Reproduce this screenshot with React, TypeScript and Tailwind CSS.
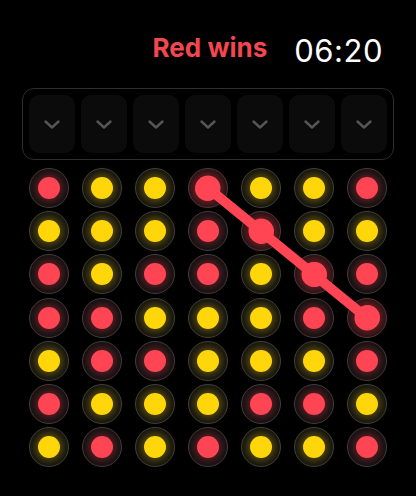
import React from "react";

const board = [
  "RYYRYYR",
  "YYYRRYY",
  "RYRRYRR",
  "RRYYYRR",
  "YRRYYYR",
  "RYYYRRY",
  "YRYRYYR",
];

const wins = ["0-3", "1-4", "2-5", "3-6"];

function Chevron() {
  return (
    <svg width="18" height="11" viewBox="0 0 18 11" fill="none">
      <path d="M2.5 2.5 L9 8.5 L15.5 2.5" stroke="#555555" strokeWidth="2.4" strokeLinecap="round" strokeLinejoin="round" />
    </svg>
  );
}

function Cell({ color, win }: { color: string; win: boolean }) {
  const red = color === "R";
  return (
    <div className="flex items-center justify-center">
      <div
        className={`w-[40px] h-[40px] rounded-full border-[1.5px] border-[#3c3c3c] flex items-center justify-center ${
          win ? "bg-[#241012]" : "bg-[#101010]"
        }`}
      >
        <div
          className={
            red
              ? `${win ? "w-[25px] h-[25px]" : "w-[22px] h-[22px]"} rounded-full bg-[#ff4553] shadow-[0_0_9px_3px_rgba(255,69,83,0.32)]`
              : "w-[22px] h-[22px] rounded-full bg-[#ffd60a] shadow-[0_0_9px_3px_rgba(255,214,10,0.32)]"
          }
        />
      </div>
    </div>
  );
}

export default function App() {
  return (
    <div className="w-[416px] h-[496px] bg-black overflow-hidden font-['Inter',sans-serif]">
      <div className="h-[88px] flex items-center justify-end pr-[33px] pt-[14px]">
        <span className="text-[#f2474e] font-bold text-[26px] mr-[27px] -mt-[8px]">Red wins</span>
        <span className="text-white text-[31px] tracking-[0.5px]">06:20</span>
      </div>

      <div className="mx-[22px] w-[372px] h-[72px] rounded-[12px] border border-[#2e2e2e] p-[6px] flex gap-[6px]">
        {Array.from({ length: 7 }).map((_, i) => (
          <button key={i} className="flex-1 rounded-[10px] bg-[#0b0b0b] flex items-center justify-center">
            <Chevron />
          </button>
        ))}
      </div>

      <div className="relative mx-[22px] w-[372px] mt-[8px]">
        <div className="grid grid-cols-7 auto-rows-[40px] gap-y-[3.2px]">
          {board.map((row, r) =>
            row.split("").map((c, col) => (
              <Cell key={`${r}-${col}`} color={c} win={wins.includes(`${r}-${col}`)} />
            ))
          )}
        </div>
        <svg className="absolute inset-0 pointer-events-none" width="372" height="300">
          <line x1="186" y1="20" x2="345" y2="150" stroke="#ff4553" strokeWidth="10" strokeLinecap="round" />
          {[
            [186, 20],
            [239, 63],
            [292, 106.5],
            [345, 150],
          ].map(([x, y], i) => (
            <circle key={i} cx={x} cy={y} r="12.5" fill="#ff4553" />
          ))}
        </svg>
      </div>
    </div>
  );
}
